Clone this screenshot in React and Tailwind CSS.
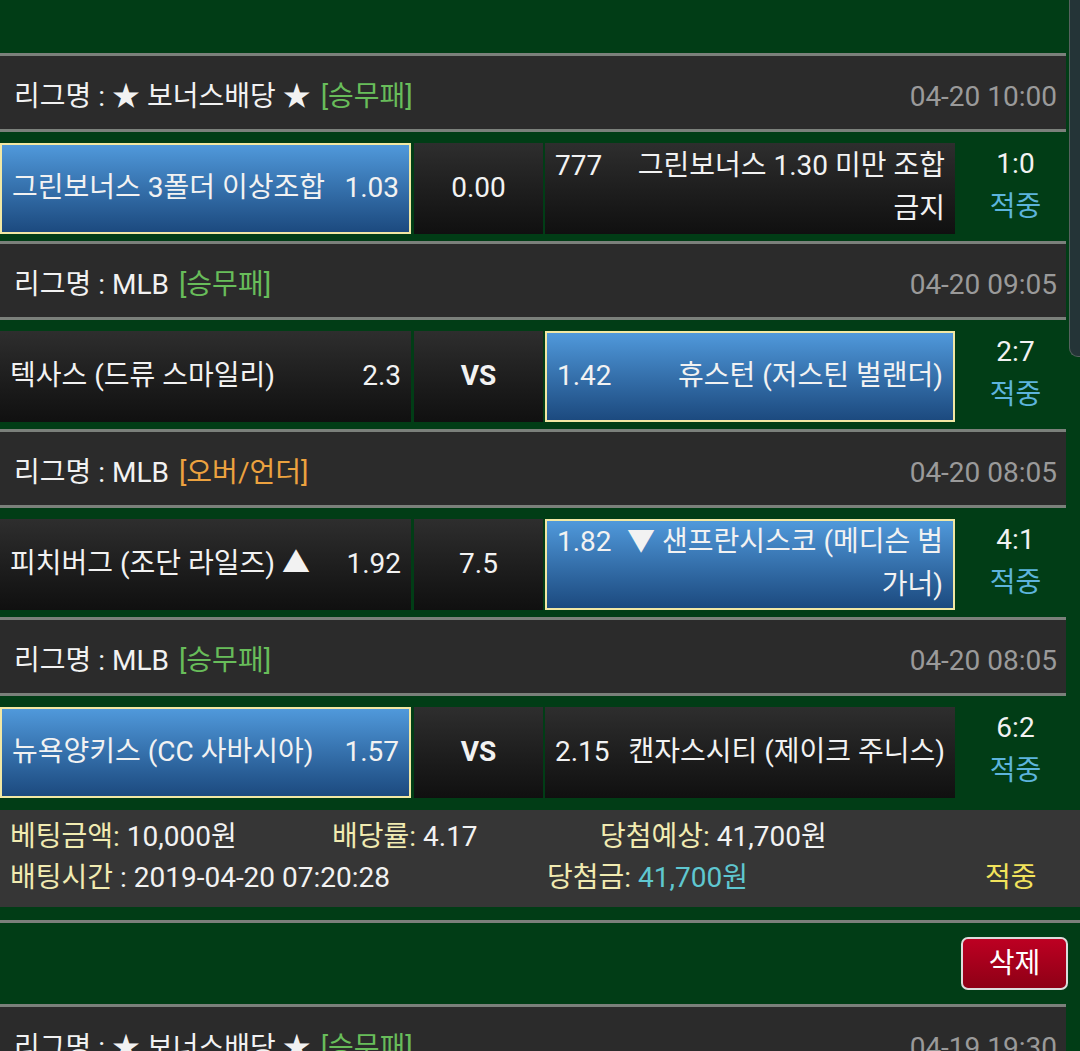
import clsx from "clsx";

const games = [
  {
    league: "★ 보너스배당 ★",
    type: "[승무패]",
    typeClass: "text-[#68bd5a]",
    date: "04-20 10:00",
    home: "그린보너스 3폴더 이상조합",
    homeOdds: "1.03",
    mid: "0.00",
    awayOdds: "777",
    away: "그린보너스 1.30 미만 조합 금지",
    pick: "home",
    score: "1:0",
  },
  {
    league: "MLB",
    type: "[승무패]",
    typeClass: "text-[#68bd5a]",
    date: "04-20 09:05",
    home: "텍사스 (드류 스마일리)",
    homeOdds: "2.3",
    mid: "VS",
    awayOdds: "1.42",
    away: "휴스턴 (저스틴 벌랜더)",
    pick: "away",
    score: "2:7",
  },
  {
    league: "MLB",
    type: "[오버/언더]",
    typeClass: "text-[#eca23f]",
    date: "04-20 08:05",
    home: "피치버그 (조단 라일즈) ▲",
    homeOdds: "1.92",
    mid: "7.5",
    awayOdds: "1.82",
    away: "▼ 샌프란시스코 (메디슨 범 가너)",
    pick: "away",
    score: "4:1",
  },
  {
    league: "MLB",
    type: "[승무패]",
    typeClass: "text-[#68bd5a]",
    date: "04-20 08:05",
    home: "뉴욕양키스 (CC 사바시아)",
    homeOdds: "1.57",
    mid: "VS",
    awayOdds: "2.15",
    away: "캔자스시티 (제이크 주니스)",
    pick: "home",
    score: "6:2",
  },
];

function LeagueHeader({ league, type, typeClass, date }) {
  return (
    <div className="flex h-[79px] w-[1066px] items-center justify-between border-y-[3px] border-[#7b807b] bg-[#2b2b2b] pr-[9px] pl-[14px] pt-[9px]">
      <div>
        리그명 : {league}
        <span className={clsx("ml-[10px]", typeClass)}>{type}</span>
      </div>
      <div className="text-[#9a9a9a]">{date}</div>
    </div>
  );
}

function Cell({ picked, className, children }) {
  return (
    <div
      className={clsx(
        "flex h-full items-center px-[10px] pb-[3px]",
        picked
          ? "border-2 border-[#f2e8a4] bg-linear-to-b from-[#5099db] to-[#1c4a7f]"
          : "bg-linear-to-b from-[#2e2e2e] to-[#101010]",
        className
      )}
    >
      {children}
    </div>
  );
}

function GameRow({ game }) {
  return (
    <div className="mt-[11px] mb-[7px] flex h-[91px] w-[1066px] leading-[43px] break-keep">
      <Cell picked={game.pick === "home"} className="w-[411px] justify-between">
        <span>{game.home}</span>
        <span>{game.homeOdds}</span>
      </Cell>
      <Cell className="ml-[3px] w-[129px] justify-center">
        <span className={clsx(game.mid === "VS" && "font-bold")}>{game.mid}</span>
      </Cell>
      <Cell picked={game.pick === "away"} className="ml-[2px] w-[410px]">
        <div className="flex w-full items-start justify-between gap-[8px]">
          <span className="shrink-0">{game.awayOdds}</span>
          <span className="min-w-0 text-right">{game.away}</span>
        </div>
      </Cell>
      <div className="flex flex-1 flex-col items-center justify-center pb-[8px] pl-[10px]">
        <span>{game.score}</span>
        <span className="text-[#5db4dc]">적중</span>
      </div>
    </div>
  );
}

export default function App() {
  return (
    <div className="relative min-h-screen overflow-hidden bg-[#013d16] pt-[53px] font-['Roboto','Noto_Sans_CJK_KR',sans-serif] text-[28px] text-[#f2f2f2]">
      {/* bet slip */}
      <div className="border-b-[3px] border-[#7b807b] pb-[13px]">
        {games.map((g, i) => (
          <div key={i}>
            <LeagueHeader {...g} />
            <GameRow game={g} />
          </div>
        ))}
        <div className="mt-[12px] h-[97px] bg-[#363636] pt-[6px] leading-[41px]">
          <div className="flex">
            <div className="w-[332px] pl-[10px]">
              <span className="text-[#f1ebb1]">베팅금액:</span> 10,000원
            </div>
            <div className="w-[268px]">
              <span className="text-[#f1ebb1]">배당률:</span> 4.17
            </div>
            <div>
              <span className="text-[#f1ebb1]">당첨예상:</span> 41,700원
            </div>
          </div>
          <div className="flex">
            <div className="w-[547px] pl-[10px]">
              <span className="text-[#f1ebb1]">배팅시간</span> : 2019-04-20 07:20:28
            </div>
            <div className="w-[438px]">
              <span className="text-[#f1ebb1]">당첨금:</span>{" "}
              <span className="text-[#5fc7d0]">41,700원</span>
            </div>
            <div className="text-[#f2e35c]">적중</div>
          </div>
        </div>
      </div>

      <div className="flex h-[81px] items-start justify-end pt-[14px] pr-[12px]">
        <button className="flex h-[53px] w-[107px] items-center justify-center rounded-[7px] border-2 border-[#dcdcdc] bg-linear-to-b from-[#bd0022] to-[#8e0016] text-white">
          삭제
        </button>
      </div>

      <LeagueHeader
        league="★ 보너스배당 ★"
        type="[승무패]"
        typeClass="text-[#68bd5a]"
        date="04-19 19:30"
      />

      {/* overlay scroll thumb */}
      <div className="absolute top-0 right-0 h-[357px] w-[11px] rounded-bl-[9px] border-b border-l border-[#56625f] bg-[#243437]" />
    </div>
  );
}
